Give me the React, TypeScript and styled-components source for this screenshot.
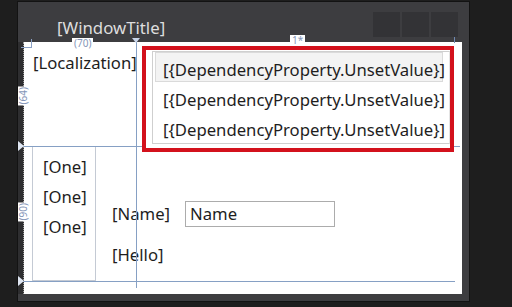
import React from "react";
import styled, { createGlobalStyle } from "styled-components";

const GlobalStyle = createGlobalStyle`
  html, body {
    margin: 0;
    padding: 0;
    background: #1e1e1e;
  }
  body {
    width: 512px;
    height: 307px;
    overflow: hidden;
    font-family: "Noto Sans", "Open Sans", sans-serif;
  }
`;

const Stage = styled.div`
  width: 512px;
  height: 307px;
  box-sizing: border-box;
  padding: 1px 0 0 17px;
  background: #1e1e1e;
`;

const Window = styled.div`
  width: 453px;
  height: 301px;
  box-sizing: border-box;
  border: 1px solid #131313;
  background: #3d3d40;
  display: flex;
  flex-direction: column;
`;

const TitleBar = styled.div`
  height: 40px;
  flex: none;
  box-sizing: border-box;
  display: flex;
  align-items: flex-start;
  padding: 10px 11px 0 39px;
`;

const Title = styled.div`
  flex: 1;
  margin-top: 8px;
  color: #dedede;
  font-size: 16.8px;
  line-height: 16px;
`;

const CaptionButtons = styled.div`
  display: flex;
  gap: 2px;
`;

const CaptionButton = styled.div`
  width: 27px;
  height: 25px;
  background: #333336;
`;

const Body = styled.div`
  flex: 1;
  display: flex;
  padding-bottom: 7px;
`;

const Ruler = styled.div`
  width: 6px;
  flex: none;
  box-sizing: border-box;
  background: #2e2e30;
  border-right: 1px dotted #9a9a9a;
`;

const Surface = styled.div`
  position: relative;
  width: 438px;
  height: 252px;
  background: #fff;
  display: grid;
  grid-template-columns: 112px 1fr;
  grid-template-rows: 104px 135px 1fr;
  color: #1e1e1e;
  font-size: 16.7px;
`;

const Localization = styled.div`
  padding: 10px 0 0 9px;
  line-height: 22px;
  white-space: nowrap;
`;

const Highlight = styled.div`
  margin: 4px 0 0 6px;
  width: 312px;
  height: 106px;
  box-sizing: border-box;
  border: 4px solid #d3111c;
  background: #fff;
  position: relative;
  z-index: 2;
`;

const List = styled.div`
  margin: 1px 0 0 6px;
  height: 93px;
  box-sizing: border-box;
  border: 1px solid #cfcfcf;
  border-right-color: #e4e4e4;
  padding: 0 6px 0 2px;
`;

const ListItem = styled.div<{ $selected?: boolean }>`
  height: 30px;
  box-sizing: border-box;
  padding: 4px 0 0 7px;
  line-height: 26px;
  white-space: nowrap;
  border: 1px solid ${(p) => (p.$selected ? "#dadada" : "transparent")};
  background: ${(p) => (p.$selected ? "#f3f3f3" : "transparent")};
`;

const SecondRow = styled.div`
  grid-column: 1 / -1;
  display: flex;
  padding-left: 8px;
`;

const GroupBox = styled.div`
  width: 64px;
  height: 134px;
  margin-top: 1px;
  box-sizing: border-box;
  border: 1px solid #c4cad4;
  border-top: none;
  padding: 5px 0 0 10px;
`;

const GroupItem = styled.div`
  line-height: 30px;
`;

const Form = styled.div`
  margin-left: 16px;
  padding-top: 55px;
  display: flex;
  flex-direction: column;
  gap: 15px;
`;

const FormRow = styled.div`
  display: flex;
  align-items: center;
  height: 26px;
`;

const FieldLabel = styled.span`
  width: 73px;
  line-height: 22px;
`;

const TextBox = styled.div`
  width: 150px;
  height: 26px;
  box-sizing: border-box;
  border: 1px solid #acacac;
  padding-left: 4px;
  line-height: 24px;
`;

const VLine = styled.div<{ $left: number; $top: number; $len: number }>`
  position: absolute;
  left: ${(p) => p.$left}px;
  top: ${(p) => p.$top}px;
  height: ${(p) => p.$len}px;
  width: 1px;
  background: #86a0c4;
  z-index: 3;
`;

const HLine = styled.div<{ $left: number; $top: number; $len: number }>`
  position: absolute;
  left: ${(p) => p.$left}px;
  top: ${(p) => p.$top}px;
  width: ${(p) => p.$len}px;
  height: 1px;
  background: #86a0c4;
  z-index: 1;
`;

const DownMarker = styled.div<{ $left: number }>`
  position: absolute;
  left: ${(p) => p.$left}px;
  top: -4px;
  width: 0;
  height: 0;
  border-left: 4px solid transparent;
  border-right: 4px solid transparent;
  border-top: 5px solid #c9d6ea;
  z-index: 4;
`;

const RightMarker = styled.div<{ $top: number }>`
  position: absolute;
  left: -6px;
  top: ${(p) => p.$top}px;
  width: 0;
  height: 0;
  border-top: 5px solid transparent;
  border-bottom: 5px solid transparent;
  border-left: 6px solid #dfe6f2;
  z-index: 4;
`;

const SizeTag = styled.span<{ $left: number; $top: number; $vertical?: boolean }>`
  position: absolute;
  left: ${(p) => p.$left}px;
  top: ${(p) => p.$top}px;
  background: #fff;
  color: #8596b8;
  font-family: "Noto Sans", sans-serif;
  font-size: 10px;
  line-height: 10px;
  padding: ${(p) => (p.$vertical ? "1px 0" : "0 2px")};
  z-index: 4;
  ${(p) => p.$vertical && "writing-mode: vertical-rl; transform: rotate(180deg);"}
`;

const Corner = styled.div`
  position: absolute;
  left: -3px;
  top: -3px;
  width: 10px;
  height: 8px;
  border-right: 1px solid #8aa0c4;
  border-bottom: 1px solid #8aa0c4;
  z-index: 4;
`;

const TopTick = styled.div`
  position: absolute;
  right: 7px;
  top: -5px;
  width: 1px;
  height: 6px;
  background: #6f88b0;
  z-index: 4;
`;

const items = [
  "[{DependencyProperty.UnsetValue}]",
  "[{DependencyProperty.UnsetValue}]",
  "[{DependencyProperty.UnsetValue}]",
];

export default function App() {
  return (
    <>
      <GlobalStyle />
      <Stage>
        <Window>
          <TitleBar>
            <Title>[WindowTitle]</Title>
            <CaptionButtons>
              <CaptionButton />
              <CaptionButton />
              <CaptionButton />
            </CaptionButtons>
          </TitleBar>
          <Body>
            <Ruler />
            <Surface>
              <Localization>[Localization]</Localization>
              <div>
                <Highlight>
                  <List>
                    {items.map((t, i) => (
                      <ListItem key={i} $selected={i === 0}>
                        {t}
                      </ListItem>
                    ))}
                  </List>
                </Highlight>
              </div>
              <SecondRow>
                <GroupBox>
                  <GroupItem>[One]</GroupItem>
                  <GroupItem>[One]</GroupItem>
                  <GroupItem>[One]</GroupItem>
                </GroupBox>
                <Form>
                  <FormRow>
                    <FieldLabel>[Name]</FieldLabel>
                    <TextBox>Name</TextBox>
                  </FormRow>
                  <FormRow>
                    <FieldLabel>[Hello]</FieldLabel>
                  </FormRow>
                </Form>
              </SecondRow>

              <Corner />
              <TopTick />
              <VLine $left={112} $top={-4} $len={250} />
              <HLine $left={-6} $top={104} $len={442} />
              <HLine $left={-6} $top={239} $len={437} />
              <DownMarker $left={108} />
              <RightMarker $top={99} />
              <RightMarker $top={234} />
              <SizeTag $left={48} $top={-4}>(70)</SizeTag>
              <SizeTag $left={266} $top={-7}>1*</SizeTag>
              <SizeTag $left={-6} $top={44} $vertical>(64)</SizeTag>
              <SizeTag $left={-6} $top={160} $vertical>(90)</SizeTag>
            </Surface>
          </Body>
        </Window>
      </Stage>
    </>
  );
}
